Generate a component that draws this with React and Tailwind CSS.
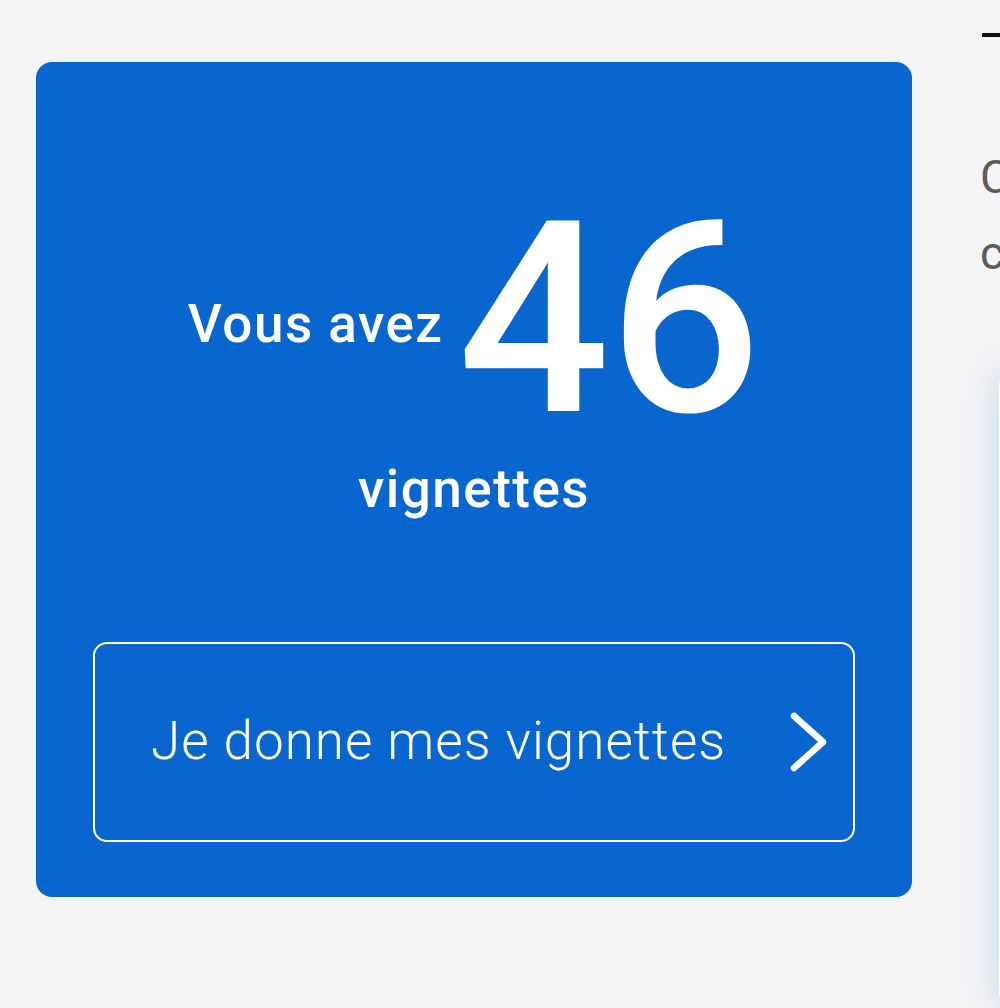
import React from "react";

const ChevronIcon = () => (
  <svg width="40" height="62" viewBox="0 0 40 62" fill="none">
    <polyline
      points="5,5 34,31 5,57"
      stroke="white"
      strokeWidth="6.5"
      strokeLinecap="round"
      strokeLinejoin="round"
    />
  </svg>
);

const App = () => {
  return (
    <div
      className="w-[1000px] h-[1008px] overflow-hidden bg-[#f4f4f6] flex"
      style={{ fontFamily: "Roboto, 'Noto Sans', sans-serif" }}
    >
      {/* Stickers card */}
      <div className="ml-[36px] mt-[62px] w-[876px] h-[835px] shrink-0 bg-[#0a66cf] rounded-[16px] flex flex-col items-center pt-[123px] px-[57px]">
        <div className="flex items-center gap-[14px] text-white">
          <span className="text-[53px] font-medium leading-none tracking-[1.5px] mt-[11px]">
            Vous avez
          </span>
          <span className="text-[268px] font-medium leading-none tracking-[-1px]">
            46
          </span>
        </div>
        <p className="text-white text-[53px] font-medium leading-none tracking-[1.5px] mt-[10px]">
          vignettes
        </p>

        <button className="mt-[126px] w-full h-[200px] border-[2.5px] border-white rounded-[14px] flex items-center justify-between pl-[56px] pr-[24px] text-white">
          <span className="text-[53px] font-light tracking-[1px]">
            Je donne mes vignettes
          </span>
          <ChevronIcon />
        </button>
      </div>

      {/* Right column, cut off by the viewport */}
      <div className="ml-[68px] shrink-0 w-[600px] flex flex-col">
        <div className="mt-[33px] ml-[2px] w-[40px] h-[4px] bg-[#111]" />
        <p className="mt-[102px] text-[46px] leading-[76px] text-[#5c5c5c] whitespace-nowrap">
          Chaque vignette compte
          <br />
          collectez et partagez
        </p>
        <div className="mt-[79px] ml-[19px] h-[700px] bg-white rounded-[16px] shadow-[0_0_40px_rgba(10,80,200,0.18)]" />
      </div>
    </div>
  );
};

export default App;
